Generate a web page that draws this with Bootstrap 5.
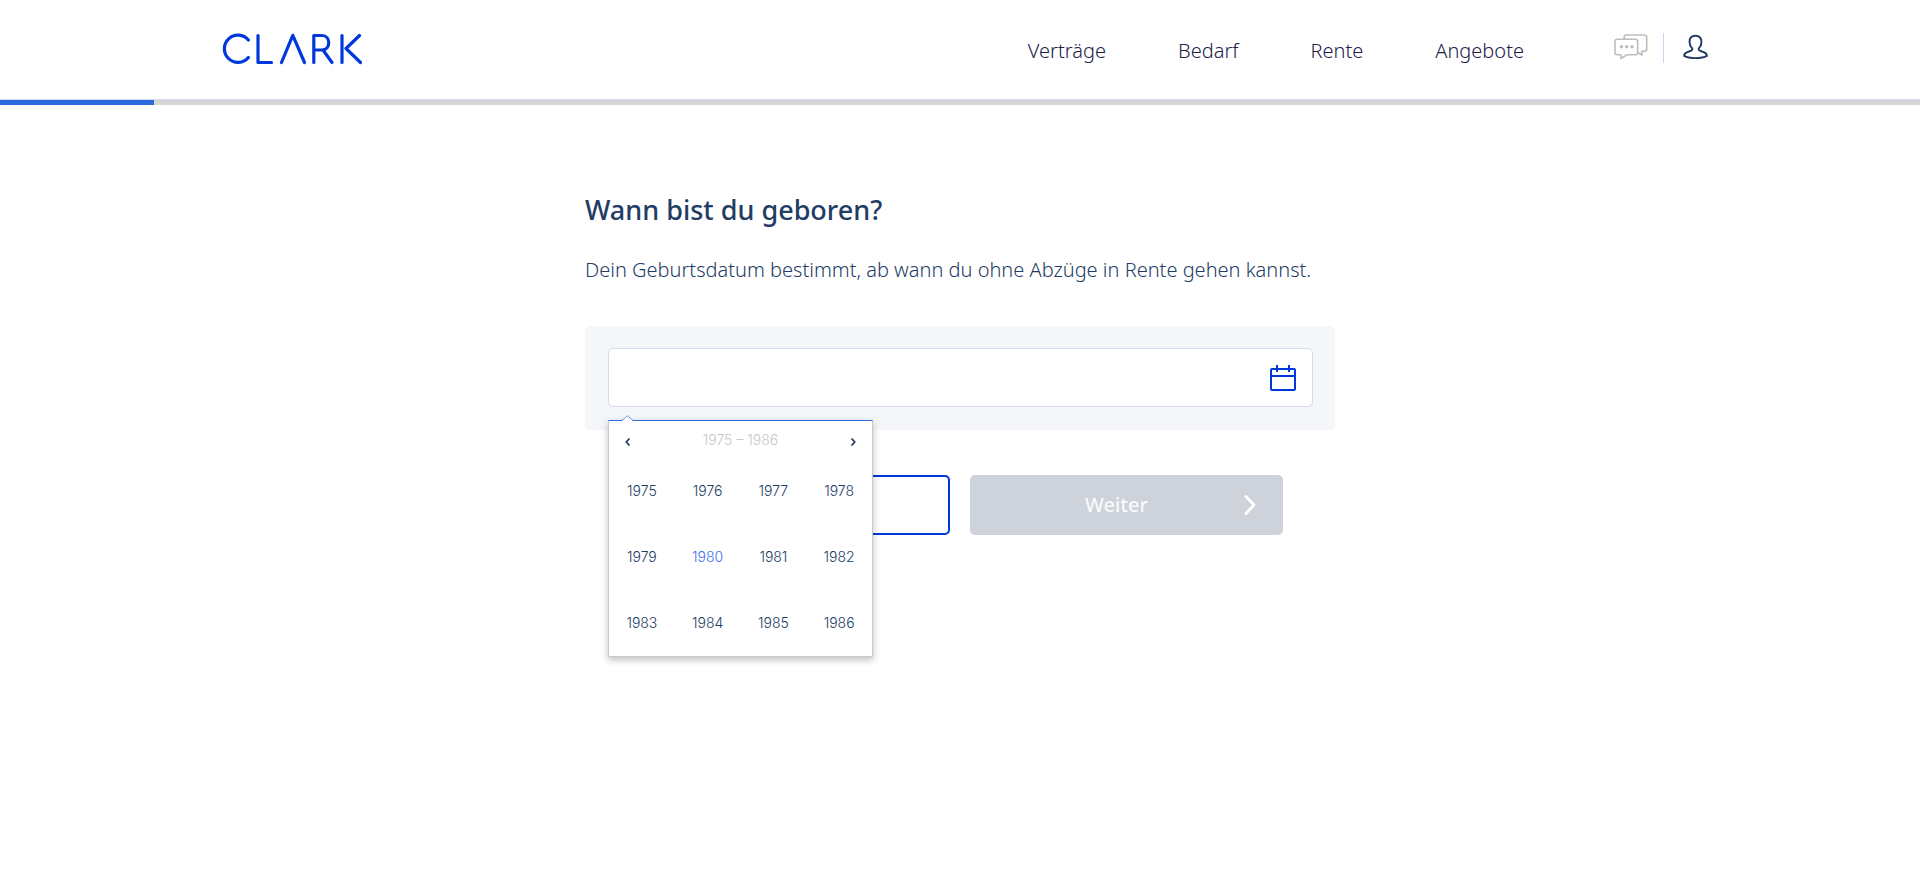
<!DOCTYPE html>
<html lang="de">
<head>
<meta charset="utf-8">
<meta name="viewport" content="width=device-width, initial-scale=1">
<title>Clark – Rente</title>
<link href="https://cdn.jsdelivr.net/npm/bootstrap@5.3.0/dist/css/bootstrap.min.css" rel="stylesheet">
<style>
  :root { --brand: #0038dc; --ink: #233c64; --accent: #2b6bdd; }
  body { font-family: "Noto Sans", sans-serif; font-weight: 300; font-size: 20px; line-height: 30px; color: var(--ink); background: #fff; }

  .site-header { border-bottom: 1px solid #d5d9ec; }
  .site-header .header-inner { max-width: 1510px; min-height: 99px; padding: 0 7px 0 17px; }
  .brand-link { padding-bottom: 2px; }
  .main-links { column-gap: 72px; margin-right: 90px; padding-top: 2px; }
  .main-links a { color: #1b2148; text-decoration: none; }
  .header-icons { column-gap: 15px; padding-bottom: 4px; }
  .header-icons a { padding-bottom: 2px; }
  .header-icons .divider { width: 1px; height: 30px; background: #ccd4ec; }
  .step-progress { height: 5px; border-radius: 0; background: #d5d5d5; }
  .step-progress .progress-bar { background: var(--accent); }

  .question { max-width: 750px; padding-top: 87px; }
  .question h1 { font-size: 27px; line-height: 36px; font-weight: 500; margin-bottom: 27px; }
  .question p { margin-bottom: 41px; }
  .date-panel { background: #f4f6fa; border-radius: 5px; padding: 22px 22px 23px 23px; }
  .date-panel .form-control { height: 59px; border: 1px solid #d7dcec; border-radius: 5px; padding-right: 60px; font-size: 20px; }
  .calendar-icon { right: 16px; top: 17px; }

  .year-picker { top: 72px; left: 0; width: 265px; background: #fff; border: 1px solid #c9c9c9; border-top-color: var(--accent); box-shadow: 0 3px 7px rgba(0,0,0,.25); z-index: 5; font-family: Inter, sans-serif; font-size: 14px; line-height: 20px; }
  .year-picker .tip { top: -6px; left: 12px; }
  .year-picker .range { color: #c8c8c8; }
  .picker-head { height: 37px; padding: 4px 10px 0; }
  .year-picker button { font: inherit; color: var(--ink); background: none; border: 0; padding: 0; }
  .picker-head button { width: 18px; height: 32px; }
  .year-grid { display: grid; grid-template-columns: repeat(4, 1fr); grid-auto-rows: 66px; }
  .year-picker .year-grid .current { color: #426fe8; }

  .form-actions { gap: 20px; padding-top: 45px; }
  .form-actions .btn { width: 313px; height: 60px; border-radius: 5px; font-size: 20px; font-weight: 500; }
  .btn-back { border: 2px solid var(--brand); }
  .form-actions .btn-next { background: #ced2da; color: #f9f9fa; border: 0; opacity: 1; padding: 0 27px; }
</style>
<script src="https://cdn.jsdelivr.net/npm/bootstrap@5.3.0/dist/js/bootstrap.bundle.min.js" defer></script>
</head>
<body class="min-vh-100">
<header class="site-header">
  <div class="header-inner container-fluid d-flex align-items-center">
    <a href="#" class="brand-link d-block" aria-label="Clark">
      <svg class="d-block" width="140" height="32" viewBox="0 0 140 32" fill="none" stroke="#0038dc" stroke-width="3.2" stroke-linecap="round" stroke-linejoin="round">
        <path d="M26.400 7A13.600 13.600 0 1 0 26.400 24.500"/>
        <path d="M36 2.500V29.500H49.500"/>
        <path d="M59.500 29.500 70.800 2.300 82.500 29.500"/>
        <path d="M91.800 29.500V2.500H100C109 2.500 109 17 100 17H92M101 17 110 29.500"/>
        <path d="M120 2.500V29.500M137.500 2.500 124 15.500 138.500 29.500"/>
      </svg>
    </a>
    <nav class="main-links d-flex ms-auto" aria-label="Hauptmenü">
      <a href="#">Verträge</a>
      <a href="#">Bedarf</a>
      <a href="#">Rente</a>
      <a href="#">Angebote</a>
    </nav>
    <div class="header-icons d-flex align-items-center">
      <a href="#" aria-label="Nachrichten">
        <svg class="d-block" width="34" height="26" viewBox="0 0 34 26" fill="none" stroke="#bdbdbd" stroke-width="1.600" stroke-linejoin="round">
          <path d="M10.200 5V3.200Q10.200 1 12.400 1H30.500Q32.700 1 32.700 3.200V15Q32.700 17.200 30.500 17.200H28V21.200L24 18.500"/>
          <path d="M3.200 5.200H21.500Q23.700 5.200 23.700 7.400V18.500Q23.700 20.700 21.500 20.700H13L7 24.500V20.700H3.200Q1 20.700 1 18.500V7.400Q1 5.200 3.200 5.200Z"/>
          <g fill="#bdbdbd" stroke="none"><circle cx="7.500" cy="12.800" r="1.700"/><circle cx="12.700" cy="12.800" r="1.700"/><circle cx="18" cy="12.800" r="1.700"/></g>
        </svg>
      </a>
      <span class="divider"></span>
      <a href="#" class="ps-1" aria-label="Profil">
        <svg class="d-block" width="25" height="26" viewBox="0 0 26 26" fill="none" stroke="#233c64" stroke-width="2" stroke-linejoin="round">
          <path d="M13 1.300C8.800 1.300 6.800 4 6.800 7.600C6.800 10.300 7.700 12.500 9.200 13.900C10.200 15.200 9.800 16.200 8.200 16.900L4 18.600C1.800 19.600 1.200 20.500 1.200 22.300C4 24 8.500 24.600 13 24.600S22 24 24.800 22.300C24.800 20.500 24.200 19.600 22 18.600L17.800 16.900C16.200 16.200 15.800 15.200 16.800 13.900C18.300 12.500 19.200 10.300 19.200 7.600C19.200 4 17.200 1.300 13 1.300Z"/>
        </svg>
      </a>
    </div>
  </div>
</header>
<div class="progress step-progress" role="progressbar" aria-label="Fortschritt" aria-valuenow="8" aria-valuemin="0" aria-valuemax="100">
  <div class="progress-bar" style="width: 8%"></div>
</div>

<main class="question mx-auto">
  <h1>Wann bist du geboren?</h1>
  <p><label for="birthdate">Dein Geburtsdatum bestimmt, ab wann du ohne Abzüge in Rente gehen kannst.</label></p>
  <div class="date-panel">
    <div class="position-relative">
      <input id="birthdate" class="form-control" type="text" autocomplete="off">
      <svg class="calendar-icon position-absolute" width="27" height="27" viewBox="0 0 27 27" fill="none" stroke="#0038dc" stroke-width="2">
        <rect x="1" y="4" width="24" height="21" rx="1"/>
        <path d="M1 11H25M7 0V7M19 0V7"/>
      </svg>
      <div class="year-picker position-absolute">
        <svg class="tip position-absolute" width="13" height="7" viewBox="0 0 13 7">
          <path d="M0.500 6.500 6.500 0.700 12.500 6.500Z" fill="#fff"/>
          <path d="M0.500 5.800 6.500 0.700 12.500 5.800" fill="none" stroke="#6d9bea"/>
        </svg>
        <div class="picker-head d-flex align-items-center justify-content-between">
          <button type="button" aria-label="Zurückblättern">
            <svg class="d-block mx-auto" width="6" height="8" viewBox="0 0 6 8" fill="none" stroke="#233c64" stroke-width="1.700"><path d="M4.500 0.500 1.300 4 4.500 7.500"/></svg>
          </button>
          <span class="range pb-1">1975 – 1986</span>
          <button type="button" aria-label="Weiterblättern">
            <svg class="d-block mx-auto" width="6" height="8" viewBox="0 0 6 8" fill="none" stroke="#233c64" stroke-width="1.700"><path d="M1.500 0.500 4.700 4 1.500 7.500"/></svg>
          </button>
        </div>
        <div class="year-grid">
          <button type="button">1975</button>
          <button type="button">1976</button>
          <button type="button">1977</button>
          <button type="button">1978</button>
          <button type="button">1979</button>
          <button type="button" class="current">1980</button>
          <button type="button">1981</button>
          <button type="button">1982</button>
          <button type="button">1983</button>
          <button type="button">1984</button>
          <button type="button">1985</button>
          <button type="button">1986</button>
        </div>
      </div>
    </div>
  </div>
  <div class="form-actions d-flex justify-content-center">
    <button type="button" class="btn btn-back" aria-label="Zurück"></button>
    <button type="button" class="btn btn-next d-flex align-items-center" disabled>
      <span class="flex-grow-1 pe-2">Weiter</span>
      <svg width="12" height="20" viewBox="0 0 12 20" fill="none" stroke="#fff" stroke-width="3" stroke-linecap="round" stroke-linejoin="round"><path d="M2 1.500 10 10 2 18.500"/></svg>
    </button>
  </div>
</main>
</body>
</html>
